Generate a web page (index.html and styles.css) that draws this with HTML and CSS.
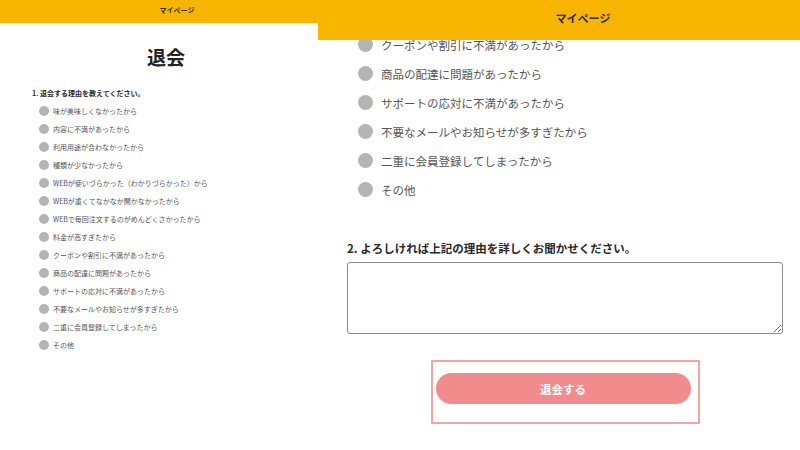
FILE: index.html
```html
<!DOCTYPE html>
<html lang="ja">
<head>
<meta charset="utf-8">
<title>退会</title>
<link rel="stylesheet" href="styles.css">
</head>
<body>
<div class="screens">
  <section class="screen small">
    <header class="bar small-bar">マイページ</header>
    <h1 class="title">退会</h1>
    <form class="form small-form">
      <p class="q">1. 退会する理由を教えてください。</p>
      <ul class="opts">
        <li><span class="dot"></span>味が美味しくなかったから</li>
        <li><span class="dot"></span>内容に不満があったから</li>
        <li><span class="dot"></span>利用用途が合わなかったから</li>
        <li><span class="dot"></span>種類が少なかったから</li>
        <li><span class="dot"></span>WEBが使いづらかった（わかりづらかった）から</li>
        <li><span class="dot"></span>WEBが重くてなかなか開かなかったから</li>
        <li><span class="dot"></span>WEBで毎回注文するのがめんどくさかったから</li>
        <li><span class="dot"></span>料金が高すぎたから</li>
        <li><span class="dot"></span>クーポンや割引に不満があったから</li>
        <li><span class="dot"></span>商品の配達に問題があったから</li>
        <li><span class="dot"></span>サポートの応対に不満があったから</li>
        <li><span class="dot"></span>不要なメールやお知らせが多すぎたから</li>
        <li><span class="dot"></span>二重に会員登録してしまったから</li>
        <li><span class="dot"></span>その他</li>
      </ul>
    </form>
  </section>
  <section class="screen large">
    <header class="bar large-bar">マイページ</header>
    <form class="form large-form">
      <ul class="opts big-opts">
        <li><span class="dot"></span>クーポンや割引に不満があったから</li>
        <li><span class="dot"></span>商品の配達に問題があったから</li>
        <li><span class="dot"></span>サポートの応対に不満があったから</li>
        <li><span class="dot"></span>不要なメールやお知らせが多すぎたから</li>
        <li><span class="dot"></span>二重に会員登録してしまったから</li>
        <li><span class="dot"></span>その他</li>
      </ul>
      <p class="q q2">2. よろしければ上記の理由を詳しくお聞かせください。</p>
      <textarea class="memo"></textarea>
      <div class="submit-box">
        <button type="button" class="submit">退会する</button>
      </div>
    </form>
  </section>
</div>
</body>
</html>
```
FILE: styles.css
```css
* { box-sizing: border-box; }
html, body {
  margin: 0;
  padding: 0;
  background: #fff;
}
body {
  font-family: "Noto Sans CJK JP", "Noto Sans", sans-serif;
  color: #333;
  width: 800px;
  height: 450px;
  overflow: hidden;
}
.screens {
  display: flex;
  height: 450px;
}
.screen {
  position: relative;
  overflow: hidden;
  background: #fff;
}
.small { width: 318px; flex: none; }
.large { flex: 1; }

.bar {
  background: #f8b500;
  color: #2a2a2a;
  font-weight: 700;
  text-align: center;
}
.small-bar {
  height: 23px;
  line-height: 21px;
  font-size: 7px;
  padding-left: 36px;
}
.large-bar {
  position: absolute;
  top: 0;
  left: 0;
  right: 0;
  height: 40px;
  line-height: 37px;
  font-size: 11px;
  padding-left: 48px;
  z-index: 2;
}

.title {
  margin: 22px 0 0;
  padding-left: 14px;
  text-align: center;
  font-size: 19px;
  line-height: 24px;
  font-weight: 700;
  color: #222;
}

.form { margin: 0; }
.small-form { padding-left: 32px; }
.q {
  margin: 0;
  font-weight: 700;
  color: #2a2a2a;
}
.small-form .q {
  margin-top: 19px;
  font-size: 7px;
  line-height: 10px;
}
.opts {
  list-style: none;
  margin: 0;
  padding: 0;
}
.opts li {
  display: flex;
  align-items: center;
  color: #555;
  white-space: nowrap;
}
.dot {
  flex: none;
  border-radius: 50%;
  background: #b4b4b4;
}
.small-form .opts {
  margin-top: 4px;
  padding-left: 7px;
}
.small-form .opts li {
  height: 18px;
  font-size: 7px;
}
.small-form .dot {
  width: 10px;
  height: 10px;
  margin-right: 4px;
}

.large-form {
  padding: 30px 17px 0 29px;
}
.big-opts { padding-left: 11px; }
.big-opts li {
  height: 29px;
  font-size: 11.5px;
}
.big-opts .dot {
  width: 15px;
  height: 15px;
  margin-right: 8px;
}
.q2 {
  margin-top: 36px;
  font-size: 11.5px;
  line-height: 16px;
}
.memo {
  display: block;
  margin-top: 6px;
  width: 436px;
  height: 72px;
  border: 1px solid #8a8a8a;
  border-radius: 3px;
  resize: vertical;
  font-family: inherit;
}
.submit-box {
  margin: 26px auto 0;
  width: 269px;
  height: 64px;
  border: 2px solid #f6a3a3;
  padding: 11px 7px 0 3px;
}
.submit {
  display: block;
  width: 100%;
  height: 31px;
  border: none;
  border-radius: 16px;
  background: #f28c8c;
  color: #fff;
  font-family: inherit;
  font-size: 11.5px;
  font-weight: 700;
  padding: 0;
}
```
